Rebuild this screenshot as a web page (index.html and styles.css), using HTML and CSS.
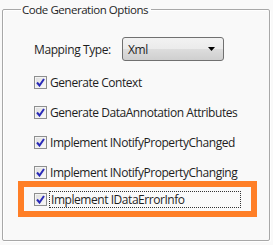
FILE: index.html
```html
<!DOCTYPE html>
<html lang="en">
<head>
    <meta charset="UTF-8">
    <title>Code Generation Options</title>
    <link rel="stylesheet" href="styles.css">
</head>
<body>
    <fieldset class="group">
        <legend class="group-title">Code Generation Options</legend>

        <div class="mapping-row">
            <span class="mapping-label">Mapping Type:</span>
            <div class="combo">
                <span class="combo-value">Xml</span>
                <svg class="combo-arrow" width="7" height="4" viewBox="0 0 7 4"><path d="M0 0h7L3.5 4z" fill="#000"/></svg>
            </div>
        </div>

        <div class="option">
            <span class="check"><svg width="9" height="9" viewBox="0 0 9 9"><path d="M1 4.5l2.5 3L8 1" stroke="#2a2ab8" stroke-width="2" fill="none"/></svg></span>
            <span class="option-text">Generate Context</span>
        </div>
        <div class="option">
            <span class="check"><svg width="9" height="9" viewBox="0 0 9 9"><path d="M1 4.5l2.5 3L8 1" stroke="#2a2ab8" stroke-width="2" fill="none"/></svg></span>
            <span class="option-text">Generate DataAnnotation Attributes</span>
        </div>
        <div class="option">
            <span class="check"><svg width="9" height="9" viewBox="0 0 9 9"><path d="M1 4.5l2.5 3L8 1" stroke="#2a2ab8" stroke-width="2" fill="none"/></svg></span>
            <span class="option-text">Implement INotifyPropertyChanged</span>
        </div>
        <div class="option">
            <span class="check"><svg width="9" height="9" viewBox="0 0 9 9"><path d="M1 4.5l2.5 3L8 1" stroke="#2a2ab8" stroke-width="2" fill="none"/></svg></span>
            <span class="option-text">Implement INotifyPropertyChanging</span>
        </div>
        <div class="highlight">
            <div class="option option-focused">
                <span class="check"><svg width="9" height="9" viewBox="0 0 9 9"><path d="M1 4.5l2.5 3L8 1" stroke="#2a2ab8" stroke-width="2" fill="none"/></svg></span>
                <span class="option-text focus">Implement IDataErrorInfo</span>
            </div>
        </div>
    </fieldset>
</body>
</html>
```

FILE: styles.css
```css
* {
    box-sizing: border-box;
}

body {
    margin: 0;
    padding: 2px 3px 0 2px;
    width: 273px;
    height: 245px;
    background: #f9f9f9;
    font-family: 'Open Sans', 'Liberation Sans', sans-serif;
    font-size: 12px;
    color: #1e1e1e;
}

.group {
    margin: 0;
    height: 239px;
    padding: 20px 10px 0 15px;
    border: 1px solid #a8a8a8;
    border-radius: 2px;
    box-shadow: inset 1px 1px 0 #fff, 1px 1px 0 #fff;
}

.group-title {
    padding: 0 3px 0 1px;
    margin-left: 3px;
    font-size: 11.5px;
    letter-spacing: -0.45px;
}

.mapping-row {
    display: flex;
    align-items: center;
    height: 24px;
    margin-left: 16px;
    letter-spacing: -0.4px;
}

.mapping-label {
    width: 88px;
}

.combo {
    display: flex;
    align-items: center;
    justify-content: space-between;
    width: 102px;
    height: 24px;
    padding: 0 8px 0 5px;
    border: 1px solid #707070;
    border-radius: 3px;
    background: linear-gradient(#f2f2f2, #ebebeb 50%, #dddddd 50%, #cfcfcf);
}

.option {
    display: flex;
    align-items: center;
    height: 18px;
    margin-top: 12px;
    margin-left: 16px;
}

.check {
    display: flex;
    align-items: center;
    justify-content: center;
    width: 13px;
    height: 13px;
    margin-right: 2px;
    border: 1px solid #8e8f8f;
    background: linear-gradient(135deg, #dcdcdc, #fbfbfb);
    box-shadow: inset 0 0 0 1px #f4f4f4;
}

.option-text {
    padding: 0 1px;
    letter-spacing: -0.45px;
}

.highlight {
    width: 239px;
    height: 36px;
    margin-top: 0;
    padding: 0 10px;
    border: 6px solid #ff7f27;
}

.option-focused {
    margin: 3px 0 0 0;
}

.focus {
    flex: 1;
    border: 1px dotted #333;
    line-height: 15px;
}
```
